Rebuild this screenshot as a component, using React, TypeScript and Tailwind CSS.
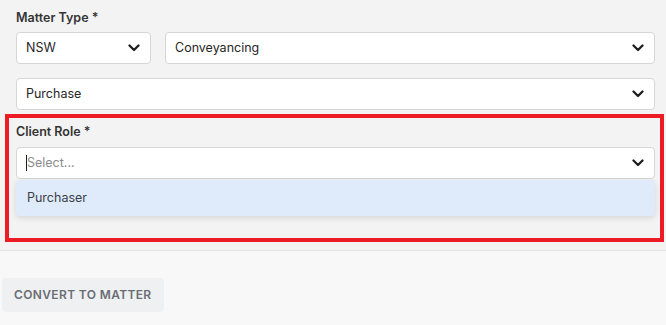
function Chevron() {
  return (
    <svg width="12" height="8" viewBox="0 0 12 8" fill="none" className="shrink-0">
      <path d="M1.5 1.5 6 6l4.5-4.5" stroke="#1f1f1f" strokeWidth="2.3" strokeLinecap="round" strokeLinejoin="round" />
    </svg>
  )
}

function Select({ value, className = '' }: { value: string; className?: string }) {
  return (
    <div
      className={`flex h-[32px] items-center justify-between rounded-[4px] border border-[#d6d6d6] bg-white pl-[9px] pr-[10px] ${className}`}
    >
      <span className="text-[12.5px] text-[#262626]">{value}</span>
      <Chevron />
    </div>
  )
}

export default function App() {
  return (
    <div className="h-[325px] w-[666px] overflow-hidden bg-[#f8f8f9] font-['Inter',sans-serif]">
      <section className="h-[251px] border-b border-[#e3e3e3] bg-[#f3f3f3] pl-4 pr-[11px] pt-[10px]">
        <p className="mb-[6px] h-4 text-[12.5px] font-semibold leading-4 text-[#333]">Matter Type *</p>
        <div className="flex gap-[14px]">
          <Select value="NSW" className="w-[135px]" />
          <Select value="Conveyancing" className="flex-1" />
        </div>
        <Select value="Purchase" className="mt-[14px]" />

        <div className="-ml-[11px] -mr-[9px] mt-[4px] h-[128px] border-4 border-[#ed1c24] pl-[7px] pr-[5px] pt-[6px]">
          <p className="mb-[7px] h-4 text-[12.5px] font-semibold leading-4 text-[#333]">Client Role *</p>
          <div className="flex h-[32px] items-center justify-between rounded-[4px] border border-[#d6d6d6] bg-white pl-[9px] pr-[10px]">
            <div className="flex items-center">
              <span className="h-[16px] w-px bg-[#222]" />
              <span className="text-[12.5px] text-[#8c8c8c]">Select...</span>
            </div>
            <Chevron />
          </div>
          <div className="mt-px flex h-[36px] items-center rounded-[4px] bg-[#dfebfb] pl-[11px] shadow-[0_2px_6px_rgba(0,0,0,0.12)]">
            <span className="text-[12.5px] text-[#3a3f47]">Purchaser</span>
          </div>
        </div>
      </section>

      <div className="px-[2px] pt-[27px]">
        <button className="h-[34px] w-[162px] rounded-[4px] bg-[#eff0f2] pl-[12px] text-left text-[12px] font-semibold uppercase tracking-[0.03em] text-[#6a6d74]">
          Convert to Matter
        </button>
      </div>
    </div>
  )
}
